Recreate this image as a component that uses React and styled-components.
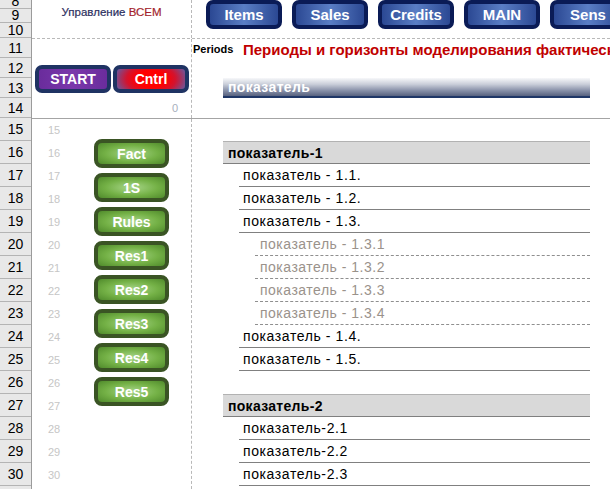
import React from 'react';
import styled, { createGlobalStyle } from 'styled-components';

const GlobalStyle = createGlobalStyle`
  html, body {
    margin: 0;
    padding: 0;
    background: #fff;
  }
  body {
    font-family: "Liberation Sans", Arial, sans-serif;
    overflow: hidden;
  }
`;

const rowHeights = [
  [8, 9], [9, 14], [10, 15], [11, 20], [12, 20], [13, 20], [14, 20],
  [15, 23], [16, 23], [17, 23], [18, 23], [19, 23], [20, 23], [21, 23], [22, 23],
  [23, 23], [24, 23], [25, 23], [26, 23], [27, 23], [28, 23], [29, 23], [30, 23], [31, 23],
];

const navItems = ['Items', 'Sales', 'Credits', 'MAIN', 'Sens'];
const sideButtons = ['Fact', '1S', 'Rules', 'Res1', 'Res2', 'Res3', 'Res4', 'Res5'];

// kind: group | item | sub | gap
const tableRows = [
  { kind: 'group', text: 'показатель-1' },
  { kind: 'item', text: 'показатель - 1.1.' },
  { kind: 'item', text: 'показатель - 1.2.' },
  { kind: 'item', text: 'показатель - 1.3.' },
  { kind: 'sub', text: 'показатель - 1.3.1' },
  { kind: 'sub', text: 'показатель - 1.3.2' },
  { kind: 'sub', text: 'показатель - 1.3.3' },
  { kind: 'sub', text: 'показатель - 1.3.4' },
  { kind: 'item', text: 'показатель - 1.4.' },
  { kind: 'item', text: 'показатель - 1.5.' },
  { kind: 'gap', text: '' },
  { kind: 'group', text: 'показатель-2' },
  { kind: 'item', text: 'показатель-2.1' },
  { kind: 'item', text: 'показатель-2.2' },
  { kind: 'item', text: 'показатель-2.3' },
];

const Sheet = styled.div`
  display: flex;
  width: 610px;
  height: 489px;
  overflow: hidden;
  background: #fff;
`;

const RowHeaders = styled.div`
  width: 32px;
  flex: none;
  box-sizing: border-box;
  background: #e8e8e8;
  border-right: 1px solid #9b9b9b;
  display: flex;
  flex-direction: column;
`;

const RowHead = styled.div`
  height: ${p => p.$h}px;
  flex: none;
  box-sizing: border-box;
  border-bottom: 1px solid #b4b4b4;
  display: flex;
  align-items: ${p => (p.$h < 20 ? 'flex-end' : 'center')};
  justify-content: center;
  font-size: 14px;
  line-height: 14px;
  color: #000;
  overflow: hidden;
`;

const Main = styled.div`
  flex: 1;
  display: flex;
  flex-direction: column;
  min-width: 0;
`;

const TopBand = styled.div`
  height: 39px;
  flex: none;
  box-sizing: border-box;
  border-bottom: 1px dashed #b9b9b9;
  display: flex;
  overflow: hidden;
`;

const ControlBand = styled.div`
  height: 80px;
  flex: none;
  box-sizing: border-box;
  border-bottom: 1px solid #a4a4a4;
  display: flex;
  overflow: hidden;
`;

const BodyBand = styled.div`
  flex: 1;
  display: flex;
  overflow: hidden;
`;

const LeftCol = styled.div`
  width: 160px;
  flex: none;
  box-sizing: border-box;
  border-right: 1px dashed #b9b9b9;
  display: flex;
  flex-direction: ${p => p.$dir || 'column'};
`;

const RightCol = styled.div`
  flex: 1;
  min-width: 0;
  display: flex;
  flex-direction: column;
  overflow: hidden;
`;

const Title = styled.div`
  padding-top: 6px;
  text-align: center;
  font-size: 11.5px;
  color: #2c2e5e;
  white-space: nowrap;
  -webkit-text-stroke: 0.2px currentColor;
  span {
    color: #a41f2d;
  }
`;

const Nav = styled.div`
  display: flex;
  gap: 10px;
  padding-left: 14px;
`;

const NavButton = styled.div`
  width: 76px;
  height: 29px;
  flex: none;
  box-sizing: border-box;
  border: 4px solid #0a1b56;
  border-radius: 7px;
  background: linear-gradient(90deg, #2b4893 0%, #5a7ec5 50%, #2b4893 100%);
  color: #fff;
  font-weight: bold;
  font-size: 15px;
  display: flex;
  align-items: center;
  justify-content: center;
`;

const ControlRow = styled.div`
  display: flex;
  gap: 2px;
  margin-top: 26px;
  padding-left: 3px;
`;

const ControlButton = styled.div`
  width: 76px;
  height: 28px;
  box-sizing: border-box;
  border: 4px solid #1f3363;
  border-radius: 7px;
  background: ${p =>
    p.$red
      ? 'radial-gradient(ellipse 60% 120% at center, #ff0000 35%, #d3132e 60%, #4d69bb 100%)'
      : 'linear-gradient(90deg, #6a2c9c 0%, #7a38ab 50%, #6a2c9c 100%)'};
  color: #fff;
  font-weight: bold;
  font-size: 14px;
  display: flex;
  align-items: center;
  justify-content: center;
`;

const Zero = styled.div`
  margin-top: 9px;
  padding-right: 13px;
  text-align: right;
  font-size: 11px;
  color: #a7afbd;
`;

const PeriodsRow = styled.div`
  height: 20px;
  flex: none;
  display: flex;
  align-items: center;
  white-space: nowrap;
`;

const PeriodsLabel = styled.div`
  width: 50px;
  flex: none;
  padding-left: 1px;
  font-size: 11px;
  font-weight: bold;
  color: #000;
`;

const PeriodsTitle = styled.div`
  font-size: 15px;
  font-weight: bold;
  color: #c00000;
`;

const HeaderBand = styled.div`
  margin: 19px 0 0 31px;
  width: 367px;
  height: 20px;
  box-sizing: border-box;
  border-bottom: 2px solid #1f3767;
  background: linear-gradient(180deg, #f7f8fa 0%, #c9ced9 35%, #8790a8 70%, #57627f 100%);
  color: #fff;
  font-weight: bold;
  font-size: 14px;
  letter-spacing: 0.35px;
  padding-left: 5px;
  display: flex;
  align-items: center;
`;

const NumbersCol = styled.div`
  width: 62px;
  flex: none;
  display: flex;
  flex-direction: column;
`;

const RowNum = styled.div`
  height: ${p => p.$h}px;
  flex: none;
  padding-left: 16px;
  display: flex;
  align-items: center;
  font-size: 11px;
  color: #c6c6c6;
`;

const SideStack = styled.div`
  display: flex;
  flex-direction: column;
  gap: 5px;
  padding-top: 20px;
`;

const GreenButton = styled.div`
  width: 75px;
  height: 29px;
  box-sizing: border-box;
  border: 4px solid #3a5424;
  border-radius: 8px;
  background: radial-gradient(ellipse at center, #a8d68a 0%, #74b146 55%, #4f8a2b 100%);
  color: #fff;
  font-weight: bold;
  font-size: 14px;
  display: flex;
  align-items: center;
  justify-content: center;
`;

const Table = styled.div`
  display: flex;
  flex-direction: column;
  width: 367px;
  margin-left: 31px;
  padding-top: 22px;
`;

const TRow = styled.div`
  height: 23px;
  flex: none;
  box-sizing: border-box;
  display: flex;
  align-items: center;
  white-space: nowrap;
  font-size: 14px;
  letter-spacing: 0.6px;
  color: #000;
  margin-left: ${p => ({ group: 0, item: 16, sub: 32, gap: 0 }[p.$kind])}px;
  padding-left: ${p => ({ group: 5, item: 4, sub: 5, gap: 0 }[p.$kind])}px;
  ${p => p.$kind === 'group' && `
    background: #d9d9d9;
    border-top: 1px solid #b2b2b2;
    border-bottom: 1px solid #7f7f7f;
    font-weight: bold;
    letter-spacing: 0.3px;
  `}
  ${p => p.$kind === 'item' && `
    border-bottom: 1px solid #808080;
  `}
  ${p => p.$kind === 'sub' && `
    border-bottom: 1px dashed #8f8f8f;
    color: #9a928b;
    letter-spacing: 0.5px;
  `}
`;

export default function App() {
  const bodyRows = rowHeights.filter(([n]) => n >= 15);
  return (
    <>
      <GlobalStyle />
      <Sheet>
        <RowHeaders>
          {rowHeights.map(([n, h]) => (
            <RowHead key={n} $h={h}>{n}</RowHead>
          ))}
        </RowHeaders>
        <Main>
          <TopBand>
            <LeftCol>
              <Title>Управление <span>ВСЕМ</span></Title>
            </LeftCol>
            <RightCol>
              <Nav>
                {navItems.map(t => (
                  <NavButton key={t}>{t}</NavButton>
                ))}
              </Nav>
            </RightCol>
          </TopBand>
          <ControlBand>
            <LeftCol>
              <ControlRow>
                <ControlButton>START</ControlButton>
                <ControlButton $red>Cntrl</ControlButton>
              </ControlRow>
              <Zero>0</Zero>
            </LeftCol>
            <RightCol>
              <PeriodsRow>
                <PeriodsLabel>Periods</PeriodsLabel>
                <PeriodsTitle>Периоды и горизонты моделирования фактических и прогнозных данных</PeriodsTitle>
              </PeriodsRow>
              <HeaderBand>показатель</HeaderBand>
            </RightCol>
          </ControlBand>
          <BodyBand>
            <LeftCol $dir="row">
              <NumbersCol>
                {bodyRows.slice(0, 16).map(([n, h], i) => (
                  <RowNum key={n} $h={i === 0 ? 22 : h}>{n}</RowNum>
                ))}
              </NumbersCol>
              <SideStack>
                {sideButtons.map(t => (
                  <GreenButton key={t}>{t}</GreenButton>
                ))}
              </SideStack>
            </LeftCol>
            <RightCol>
              <Table>
                {tableRows.map((r, i) => (
                  <TRow key={i} $kind={r.kind}>{r.text}</TRow>
                ))}
              </Table>
            </RightCol>
          </BodyBand>
        </Main>
      </Sheet>
    </>
  );
}
